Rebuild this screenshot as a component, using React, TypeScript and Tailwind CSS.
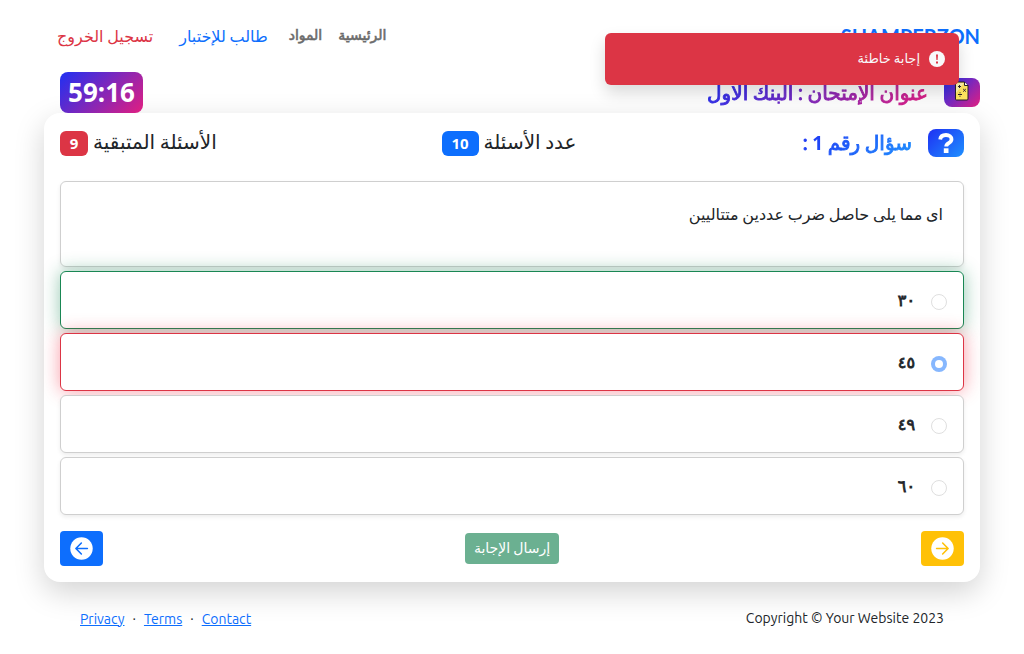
import type { ReactNode } from 'react';

const options = [
  { label: '٣٠', state: 'correct' },
  { label: '٤٥', state: 'wrong' },
  { label: '٤٩', state: 'idle' },
  { label: '٦٠', state: 'idle' },
];

const optionStyles: Record<string, string> = {
  correct: 'border-[#198754] shadow-[0_0_18px_rgba(25,135,84,0.46)]',
  wrong: 'border-[#dc3545] shadow-[0_0_18px_rgba(240,20,45,0.42)]',
  idle: 'border-[#cfcfcf] shadow-[0_2px_4px_rgba(0,0,0,0.075)]',
};

function ArrowCircle({ color, flip = false }: { color: string; flip?: boolean }) {
  return (
    <svg viewBox="0 0 16 16" className={flip ? 'size-[23px] rotate-180' : 'size-[23px]'}>
      <circle cx="8" cy="8" r="7.8" fill="#fff" />
      <path
        d="M3.9 8h7.900M8.100 4.200 11.900 8l-3.800 3.800"
        fill="none"
        stroke={color}
        strokeWidth="1.1"
        strokeLinecap="round"
        strokeLinejoin="round"
      />
    </svg>
  );
}

function MathPaper() {
  return (
    <svg viewBox="0 0 14 20" className="h-5 w-3.5">
      <path d="M1.500 1h8L13 4.500V18a1 1 0 0 1-1 1H1.500a1 1 0 0 1-1-1V2a1 1 0 0 1 1-1Z" fill="#ffe55f" stroke="#28212c" />
      <path d="M1 2h8l-8 10Z" fill="#fff3b0" />
      <path d="M9.500 1v3.500H13" fill="#fff" stroke="#28212c" />
      <path d="M3 5.500h3M4.500 4v3M8.200 8l2.600 2.600M10.800 8l-2.600 2.600M3 13.500h4" stroke="#28212c" fill="none" />
      <path d="M5 11.300v1M5 14.700v1" stroke="#28212c" />
    </svg>
  );
}

function CountBadge({ className, children }: { className: string; children: ReactNode }) {
  return (
    <span className={`flex h-[25px] items-center justify-center rounded-md font-['Noto_Sans',sans-serif] text-[15px] font-bold text-white ${className}`}>
      {children}
    </span>
  );
}

export default function App() {
  return (
    <div dir="rtl" className="relative h-[654px] overflow-hidden bg-white px-11 font-['Ubuntu','DejaVu_Sans',sans-serif] text-[#212529]">
      <header className="flex h-[72px] items-center justify-between">
        <div dir="ltr" className="font-['Lato','Noto_Sans',sans-serif] text-[20px] font-bold text-[#0d6efd]">SHAMPERZON</div>
        <nav className="flex items-center pl-[13px]">
          <a className="pb-0.5 text-[14px] text-[#6b6b6b] [-webkit-text-stroke:0.6px_#6b6b6b]">الرئيسية</a>
          <a className="mr-4 pb-0.5 text-[14px] text-[#6b6b6b] [-webkit-text-stroke:0.6px_#6b6b6b]">المواد</a>
          <a className="mr-[21px] text-base text-[#0d6efd]">طالب للإختبار</a>
          <a className="mr-[26px] text-base text-[#dc3545]">تسجيل الخروج</a>
        </nav>
      </header>

      <section className="flex h-[41px] items-center justify-between pl-4">
        <div className="flex items-center gap-4">
          <span className="flex h-[29px] w-9 items-center justify-center rounded-lg bg-[linear-gradient(135deg,#1e30f3,#e21e80)] pb-1">
            <MathPaper />
          </span>
          <h1 className="bg-[linear-gradient(135deg,#1e30f3,#e21e80)] bg-clip-text text-[20px] whitespace-nowrap text-transparent [-webkit-text-stroke:0.9px_transparent]">
            عنوان الإمتحان : البنك الاول
          </h1>
        </div>
        <div className="flex h-[41px] w-[83px] items-center justify-center rounded-lg bg-[linear-gradient(135deg,#1e30f3,#e21e80)] font-['Noto_Sans',sans-serif] text-[26px] font-bold text-white">
          59:16
        </div>
      </section>

      <main className="h-[469px] rounded-2xl bg-white px-4 pt-4 shadow-[0_10px_30px_rgba(0,0,0,0.175)]">
        <div className="grid h-7 grid-cols-3 grid-rows-[28px] items-center">
          <div className="flex items-center gap-4">
            <span className="flex h-7 w-9 items-center justify-center rounded-lg bg-[linear-gradient(135deg,#1e30f3,#1e90ff)]">
              <svg viewBox="0 0 16 20" className="h-5 w-4">
                <path d="M2.200 6.500C2.500 3.300 5 2 8 2c3.300 0 5.500 1.700 5.500 4.300 0 4.200-5.300 3.600-5.300 7.200" fill="none" stroke="#fff" strokeWidth="3.800" />
                <path d="M5.800 15.300h4.700V20H5.800Z" fill="#fff" />
              </svg>
            </span>
            <h2 className="bg-[linear-gradient(135deg,#1e30f3,#1e90ff)] bg-clip-text text-[20px] whitespace-nowrap text-transparent [-webkit-text-stroke:0.9px_transparent]">
              سؤال رقم <span className="font-['Noto_Sans',sans-serif] text-[19px] font-bold [-webkit-text-stroke:0]">1</span> :
            </h2>
          </div>
          <div className="flex items-center justify-center gap-[5px] pl-0 pr-1.5 text-[20px]">
            <span className="pb-0.5">عدد الأسئلة</span>
            <CountBadge className="w-[37px] bg-[#0d6efd]">10</CountBadge>
          </div>
          <div className="flex items-center justify-end gap-[5px] text-[20px]">
            <span className="pb-0.5">الأسئلة المتبقية</span>
            <CountBadge className="w-7 bg-[#dc3545]">9</CountBadge>
          </div>
        </div>

        <div className="mt-6 flex h-[86px] rounded-md border border-[#cfcfcf] px-5 pt-5 text-base shadow-[0_2px_4px_rgba(0,0,0,0.075)]">
          اى مما يلى حاصل ضرب عددين متتاليين
        </div>

        <div className="mt-1 flex flex-col gap-1">
          {options.map((o) => (
            <label key={o.label} className={`flex h-[58px] items-center gap-4 rounded-md border bg-white px-4 ${optionStyles[o.state]}`}>
              <span
                className={
                  o.state === 'wrong'
                    ? 'mt-1 flex size-4 items-center justify-center rounded-full bg-[#86b7fe]'
                    : 'mt-1 flex size-4 items-center justify-center rounded-full border border-[#dfdfdf]'
                }
              >
                {o.state === 'wrong' && <span className="size-2 rounded-full bg-white" />}
              </span>
              <span className="text-base [-webkit-text-stroke:0.8px_#212529]">{o.label}</span>
            </label>
          ))}
        </div>

        <div className="mt-4 flex items-center justify-between">
          <button className="flex h-[35px] w-[43px] items-center justify-center rounded bg-[#ffc107]">
            <ArrowCircle color="#ffc107" />
          </button>
          <button className="h-[31px] w-[94px] rounded bg-[#6bb091] text-[14px] whitespace-nowrap text-white">إرسال الإجابة</button>
          <button className="flex h-[35px] w-[43px] items-center justify-center rounded bg-[#0d6efd]">
            <ArrowCircle color="#0d6efd" flip />
          </button>
        </div>
      </main>

      <footer className="flex h-[72px] items-center justify-between px-9 text-[14px]">
        <span dir="ltr">Copyright © Your Website 2023</span>
        <div dir="ltr" className="flex gap-2 pt-0.5">
          <a className="text-[#0d6efd] underline">Privacy</a>
          <span>·</span>
          <a className="text-[#0d6efd] underline">Terms</a>
          <span>·</span>
          <a className="text-[#0d6efd] underline">Contact</a>
        </div>
      </footer>

      <div className="absolute top-[33px] left-[605px] flex h-[52px] w-[354px] items-center gap-[9px] rounded-md bg-[#dc3545] px-3.5 text-[13px] text-[#f8f9fa] shadow-[0_8px_16px_rgba(0,0,0,0.15)]">
        <svg viewBox="0 0 16 16" className="size-4">
          <circle cx="8" cy="8" r="8" fill="#f8f9fa" />
          <path d="M7 3.500h2l-.4 5.500H7.400ZM7 10.500h2v2H7Z" fill="#dc3545" />
        </svg>
        <span>إجابة خاطئة</span>
      </div>
    </div>
  );
}
